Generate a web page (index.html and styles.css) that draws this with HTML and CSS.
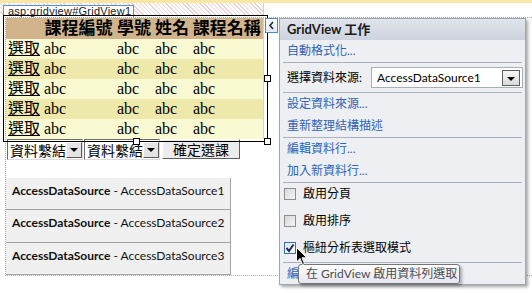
FILE: index.html
```html
<!DOCTYPE html>
<html lang="zh-Hant">

<head>
    <meta charset="UTF-8" />
    <title>GridView 工作</title>
    <link rel="stylesheet" href="styles.css">
</head>

<body>
    <div class="top-band"></div>
    <div class="tag-row">
        <span class="tag-label">asp:gridview#GridView1</span>
    </div>

    <div class="surface">
        <table class="grid">
            <colgroup>
                <col style="width: 36px">
                <col style="width: 73px">
                <col style="width: 38px">
                <col style="width: 38px">
                <col style="width: 72px">
            </colgroup>
            <tr class="head">
                <th></th>
                <th>課程編號</th>
                <th>學號</th>
                <th>姓名</th>
                <th>課程名稱</th>
            </tr>
            <tr class="odd">
                <td><a href="#">選取</a></td><td>abc</td><td>abc</td><td>abc</td><td>abc</td>
            </tr>
            <tr class="even">
                <td><a href="#">選取</a></td><td>abc</td><td>abc</td><td>abc</td><td>abc</td>
            </tr>
            <tr class="odd">
                <td><a href="#">選取</a></td><td>abc</td><td>abc</td><td>abc</td><td>abc</td>
            </tr>
            <tr class="even">
                <td><a href="#">選取</a></td><td>abc</td><td>abc</td><td>abc</td><td>abc</td>
            </tr>
            <tr class="odd">
                <td><a href="#">選取</a></td><td>abc</td><td>abc</td><td>abc</td><td>abc</td>
            </tr>
        </table>

        <div class="controls">
            <div class="select"><span>資料繫結</span><span class="arrow"></span></div>
            <div class="select"><span>資料繫結</span><span class="arrow"></span></div>
            <button class="btn">確定選課</button>
        </div>

        <div class="sources">
            <div class="source"><b>AccessDataSource</b> - AccessDataSource1</div>
            <div class="source"><b>AccessDataSource</b> - AccessDataSource2</div>
            <div class="source"><b>AccessDataSource</b> - AccessDataSource3</div>
        </div>
    </div>

    <!-- selection frame over the grid -->
    <div class="selection">
        <span class="handle h-right"></span>
        <span class="handle h-bottom"></span>
        <span class="handle h-corner"></span>
    </div>

    <button class="smart-tag">
        <svg width="7" height="9" viewBox="0 0 7 9"><path d="M5 1 L2 4.5 L5 8" fill="none" stroke="#1d2a3a" stroke-width="1.6"/></svg>
    </button>

    <!-- smart tag panel -->
    <div class="panel">
        <div class="panel-head">GridView 工作</div>
        <div class="item link">自動格式化...</div>
        <div class="sep"></div>
        <div class="item source-row">
            <span>選擇資料來源:</span>
            <div class="combo">
                <span>AccessDataSource1</span>
                <span class="combo-btn"></span>
            </div>
        </div>
        <div class="sep"></div>
        <div class="item link">設定資料來源...</div>
        <div class="item link">重新整理結構描述</div>
        <div class="sep"></div>
        <div class="item link">編輯資料行...</div>
        <div class="item link">加入新資料行...</div>
        <div class="sep"></div>
        <div class="check-row"><span class="box"></span>啟用分頁</div>
        <div class="check-row"><span class="box"></span>啟用排序</div>
        <div class="check-row last"><span class="box checked">
            <svg width="10" height="10" viewBox="0 0 10 10"><path d="M1.5 5 L4 8 L8.5 1.5" fill="none" stroke="#1b2f6b" stroke-width="2"/></svg>
        </span>樞紐分析表選取模式</div>
        <div class="sep"></div>
        <div class="item link">編輯範本</div>
    </div>

    <div class="tooltip">在 GridView 啟用資料列選取</div>

    <svg class="cursor" width="12" height="19" viewBox="0 0 12 19">
        <path d="M0.5 0.5 L0.5 15 L4 11.5 L6.5 17.5 L8.5 16.6 L6 10.8 L10.8 10.8 Z" fill="#000" stroke="#fff" stroke-width="1"/>
    </svg>
</body>

</html>
```

FILE: styles.css
```css
* {
    margin: 0;
    padding: 0;
    box-sizing: border-box;
}

body {
    position: relative;
    width: 532px;
    height: 294px;
    overflow: hidden;
    background-color: #ffffff;
    font-family: Lato, "Noto Sans CJK TC", sans-serif;
    font-size: 12px;
    color: #000;
}

.top-band {
    height: 3px;
    background-color: #fbe7a4;
}

.tag-row {
    width: 264px;
    height: 12px;
    background: repeating-linear-gradient(45deg, #ffffff 0 2px, #ecd3d3 2px 3px);
    border-right: 1px solid #e4cccc;
}

.tag-label {
    display: inline-block;
    margin-left: 3px;
    height: 12px;
    padding: 0 2px 0 4px;
    background-color: #ffffff;
    border: 1px solid #5b8fd6;
    border-bottom: none;
    font: 11px/11px "Liberation Sans", sans-serif;
    letter-spacing: 0.25px;
    color: #222;
    white-space: nowrap;
}

/* design surface */
.surface {
    width: 527px;
    margin-top: 2px;
    margin-left: 5px;
    border: 1px dotted #a8a8a8;
    border-right: none;
}

.grid {
    width: 257px;
    border-collapse: collapse;
    table-layout: fixed;
    font: 16px/20px "Liberation Serif", "Noto Sans CJK TC", serif;
    border-right: 1px solid #e2cccc;
}

.grid th,
.grid td {
    height: 20px;
    padding: 0 0 0 2px;
    white-space: nowrap;
    overflow: hidden;
    text-align: left;
}

.grid .head th {
    height: 21px;
    padding: 0;
    font-size: 17px;
    font-weight: bold;
    text-align: center;
    background-color: #d2b48c;
}

.grid .odd {
    background-color: #fafad2;
}

.grid .even {
    background-color: #eee8aa;
}

.grid a {
    color: #000;
}

.controls {
    display: flex;
    gap: 1px;
    height: 21px;
    margin-left: 1px;
    font: 14px/16px "Noto Sans CJK TC", sans-serif;
}

.select {
    display: flex;
    align-items: center;
    justify-content: space-between;
    width: 76px;
    height: 21px;
    padding: 0 1px 0 2px;
    white-space: nowrap;
    background-color: #ffffff;
    border: 1px solid #6b6b6b;
    border-right-color: #dcdcdc;
    border-bottom-color: #dcdcdc;
}

.select .arrow {
    position: relative;
    flex-shrink: 0;
    width: 16px;
    height: 16px;
    background-color: #e4e4e4;
    border: 1px solid;
    border-color: #ffffff #5a5a5a #5a5a5a #ffffff;
}

.select .arrow::after {
    content: "";
    position: absolute;
    left: 3px;
    top: 5px;
    border-left: 4px solid transparent;
    border-right: 4px solid transparent;
    border-top: 4px solid #000;
}

.btn {
    width: 78px;
    height: 20px;
    margin-left: 1px;
    background-color: #ececec;
    border: 1px solid;
    border-color: #ffffff #5e5e5e #5e5e5e #ffffff;
    font: 14px/16px "Noto Sans CJK TC", sans-serif;
    color: #000;
    white-space: nowrap;
}

.sources {
    width: 225px;
    margin-top: 18px;
}

.source {
    height: 32px;
    padding: 6px 0 0 6px;
    background-color: #f0f0f0;
    border-right: 1px solid #a4a4a4;
    border-bottom: 1px solid #a4a4a4;
    font: 12px/14px Lato, sans-serif;
    color: #111;
}

.source:nth-child(2) {
    height: 33px;
}

/* selection frame */
.selection {
    position: absolute;
    left: 3px;
    top: 15px;
    width: 265px;
    height: 127px;
    border: 1px solid #000;
}

.handle {
    position: absolute;
    width: 7px;
    height: 7px;
    background-color: #fff;
    border: 1px solid #000;
}

.h-right {
    right: -4px;
    top: 59px;
}

.h-bottom {
    left: 129px;
    bottom: -4px;
}

.h-corner {
    right: -4px;
    bottom: -4px;
}

.smart-tag {
    position: absolute;
    left: 265px;
    top: 18px;
    width: 13px;
    height: 15px;
    display: flex;
    align-items: center;
    justify-content: center;
    background: linear-gradient(#ffffff, #e4ebf5);
    border: 1px solid #4f86d0;
}

/* tasks panel */
.panel {
    position: absolute;
    left: 279px;
    top: 18px;
    width: 247px;
    height: 267px;
    background-color: #edeff3;
    border: 1px solid #9ea6b3;
    box-shadow: 2px 2px 3px rgba(0, 0, 0, 0.35);
}

.panel-head {
    height: 21px;
    padding-left: 7px;
    background: linear-gradient(#e0e4eb, #cdd3de);
    font-weight: bold;
    font-size: 13px;
    line-height: 21px;
    color: #1a1a1a;
}

.item {
    height: 22px;
    padding-left: 7px;
    line-height: 22px;
}

.link {
    color: #2e63b5;
}

.sep {
    height: 1px;
    margin: 0 3px;
    background-color: #a9b2c0;
}

.source-row {
    display: flex;
    align-items: center;
    height: 29px;
    padding-right: 2px;
    line-height: 14px;
}

.combo {
    display: flex;
    align-items: center;
    justify-content: space-between;
    width: 152px;
    height: 21px;
    margin-left: auto;
    padding: 0 2px 0 5px;
    background-color: #ffffff;
    border: 1px solid #a9afb8;
}

.combo-btn {
    position: relative;
    width: 18px;
    height: 16px;
    background: linear-gradient(#f6f6f6, #dadada);
    border: 1px solid #5f5f5f;
}

.combo-btn::after {
    content: "";
    position: absolute;
    left: 4px;
    top: 6px;
    border-left: 4px solid transparent;
    border-right: 4px solid transparent;
    border-top: 4px solid #000;
}

.check-row {
    display: flex;
    align-items: flex-start;
    height: 27px;
    padding: 5px 0 0 4px;
    line-height: 12px;
}

.check-row.last {
    height: 25px;
}

.box {
    display: flex;
    align-items: center;
    justify-content: center;
    width: 12px;
    height: 12px;
    margin-right: 7px;
    background: linear-gradient(135deg, #d8d8d8, #f4f4f4);
    border: 1px solid #8e8e8e;
}

.box.checked {
    background: linear-gradient(135deg, #dfe9f5, #ffffff);
    border-color: #3c6ea5;
}

.tooltip {
    position: absolute;
    left: 298px;
    top: 264px;
    width: 162px;
    height: 20px;
    padding-left: 7px;
    background: linear-gradient(#ffffff, #e4e5f0);
    border: 1px solid #767676;
    border-radius: 3px;
    box-shadow: 2px 2px 3px rgba(0, 0, 0, 0.3);
    line-height: 18px;
    color: #4c4c4c;
}

.cursor {
    position: absolute;
    left: 296px;
    top: 247px;
}
```
